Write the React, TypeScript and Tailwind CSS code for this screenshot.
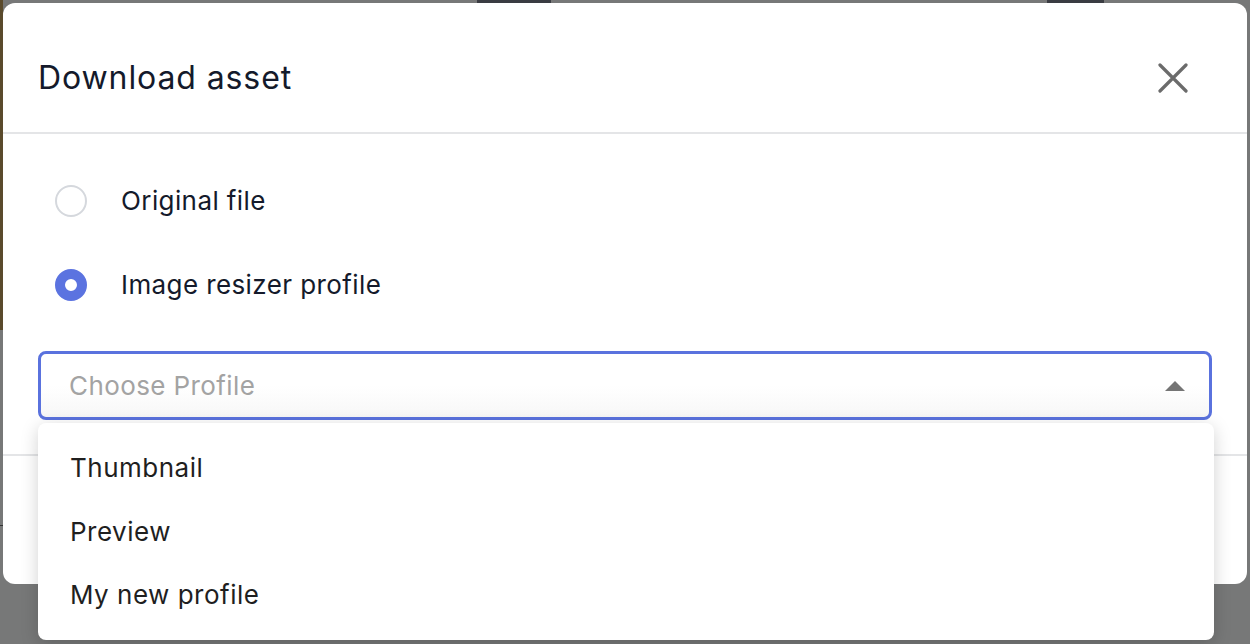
import { useState } from 'react'

const profiles = ['Thumbnail', 'Preview', 'My new profile']

const font = { fontFamily: 'Inter, "Liberation Sans", sans-serif' }

const Radio = ({ checked, label }: { checked: boolean; label: string }) => (
  <label className="h-8 flex items-center gap-[34px] cursor-pointer">
    <span
      className={`w-8 h-8 rounded-full shrink-0 ${checked ? 'border-[10px] border-[#5b73e0] bg-white' : 'border-2 border-[#d5d8dd] bg-white'}`}
    />
    <span className="text-[26px] leading-none text-[#141a2b] tracking-[0.4px]">{label}</span>
  </label>
)

export default function App() {
  const [choice] = useState('resizer')

  return (
    <div className="relative w-[1250px] h-[644px] overflow-hidden bg-[#777878] p-[3px]" style={font}>
      {/* things behind the overlay */}
      <div className="absolute left-0 top-0 w-[3px] h-[330px] bg-[#5a4a2c]" />
      <div className="absolute left-[477px] top-0 w-[74px] h-[3px] bg-[#3a3c42]" />
      <div className="absolute left-[1047px] top-0 w-[57px] h-[3px] bg-[#3a3c42]" />
      <div className="absolute left-0 top-[525px] w-[3px] h-[1px] bg-[#333]" />

      <div className="relative w-[1244px] h-[581px] bg-white rounded-[12px] flex flex-col">
        <div className="h-[131px] shrink-0 flex items-center justify-between pt-[21px] pl-[35px] pr-[59px] border-b-2 border-[#e4e5e7]">
          <h2 className="text-[32px] leading-none text-[#141a2b] tracking-[0.9px]">Download asset</h2>
          <svg width="30" height="30" viewBox="0 0 30 30" className="text-[#6b6b6b]">
            <path d="M2 2 L28 28 M28 2 L2 28" stroke="currentColor" strokeWidth="3.2" strokeLinecap="round" />
          </svg>
        </div>

        <div className="flex flex-col pt-[51px] px-[35px] h-[320px]">
          <div className="pl-[17px] flex flex-col gap-[52px]">
            <Radio checked={choice === 'original'} label="Original file" />
            <Radio checked={choice === 'resizer'} label="Image resizer profile" />
          </div>

          <div className="relative mt-[50px] w-[1174px]">
            <div className="h-[69px] rounded-[8px] border-[3px] border-[#5a72de] bg-gradient-to-b from-white from-50% to-[#f7f7f7] flex items-center justify-between pl-[28px] pr-[24px]">
              <span className="text-[26px] text-[#a3a3a3] tracking-[0.4px]">Choose Profile</span>
              <svg width="20" height="10" viewBox="0 0 20 10">
                <path d="M0 10 L10 0 L20 10 Z" fill="#757575" />
              </svg>
            </div>
          </div>
        </div>

        <div className="border-t-2 border-[#e4e5e7] flex-1" />

        <div className="absolute left-[35px] top-[420px] w-[1176px] h-[217px] bg-white rounded-[8px] shadow-[0_4px_18px_rgba(0,0,0,0.18)] flex flex-col pt-[13px]">
          {profiles.map((p) => (
            <div key={p} className="h-[63.5px] flex items-center pl-[32px] text-[26px] text-[#1f1f1f] tracking-[0.5px]">
              {p}
            </div>
          ))}
        </div>
      </div>
    </div>
  )
}
